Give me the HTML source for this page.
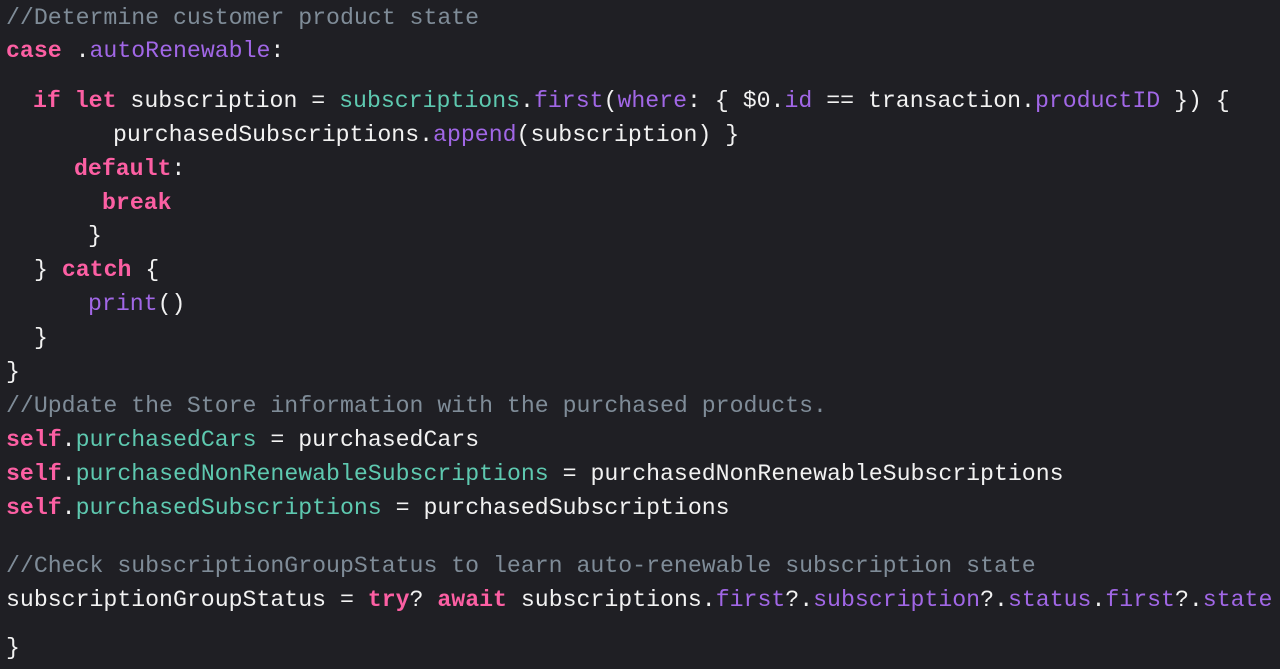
<!DOCTYPE html>
<html><head><meta charset="utf-8"><style>
html,body{margin:0;padding:0;background:#1f1f24;width:1280px;height:669px;overflow:hidden}
.l{position:absolute;white-space:pre;font-family:"Liberation Mono",monospace;font-size:23.2px;line-height:28px;color:#f2f2f2}
.c{color:#7f8c98}
.k{color:#fc5fa3;font-weight:bold}
.p{color:#a167e6}
.t{color:#5ec9b0}
</style></head><body>
<div class="l c" style="left:6px;top:4px">//Determine customer product state</div>
<div class="l" style="left:6px;top:37px"><span class="k">case</span> .<span class="p">autoRenewable</span>:</div>
<div class="l" style="left:33px;top:87px"><span class="k">if let</span> subscription = <span class="t">subscriptions</span>.<span class="p">first</span>(<span class="p">where</span>: { $0.<span class="p">id</span> == transaction.<span class="p">productID</span> }) {</div>
<div class="l" style="left:113px;top:121px">purchasedSubscriptions.<span class="p">append</span>(subscription) }</div>
<div class="l" style="left:74px;top:155px"><span class="k">default</span>:</div>
<div class="l" style="left:102px;top:189px"><span class="k">break</span></div>
<div class="l" style="left:88px;top:222px">}</div>
<div class="l" style="left:34px;top:256px">} <span class="k">catch</span> {</div>
<div class="l" style="left:88px;top:290px"><span class="p">print</span>()</div>
<div class="l" style="left:34px;top:324px">}</div>
<div class="l" style="left:6px;top:358px">}</div>
<div class="l c" style="left:6px;top:392px">//Update the Store information with the purchased products.</div>
<div class="l" style="left:6px;top:426px"><span class="k">self</span>.<span class="t">purchasedCars</span> = purchasedCars</div>
<div class="l" style="left:6px;top:460px"><span class="k">self</span>.<span class="t">purchasedNonRenewableSubscriptions</span> = purchasedNonRenewableSubscriptions</div>
<div class="l" style="left:6px;top:494px"><span class="k">self</span>.<span class="t">purchasedSubscriptions</span> = purchasedSubscriptions</div>
<div class="l c" style="left:6px;top:552px">//Check subscriptionGroupStatus to learn auto-renewable subscription state</div>
<div class="l" style="left:6px;top:586px">subscriptionGroupStatus = <span class="k">try</span>? <span class="k">await</span> subscriptions.<span class="p">first</span>?.<span class="p">subscription</span>?.<span class="p">status</span>.<span class="p">first</span>?.<span class="p">state</span></div>
<div class="l" style="left:6px;top:634px">}</div>
</body></html>
